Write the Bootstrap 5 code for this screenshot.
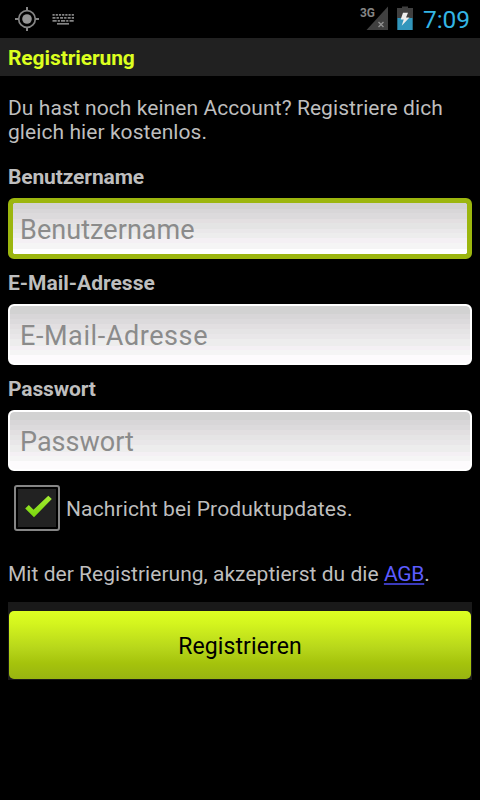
<!DOCTYPE html>
<html lang="de">
<head>
<meta charset="utf-8">
<meta name="viewport" content="width=device-width, initial-scale=1">
<title>Registrierung</title>
<link href="https://cdn.jsdelivr.net/npm/bootstrap@5.3.0/dist/css/bootstrap.min.css" rel="stylesheet">
<style>
body{background:#000;color:#bebebe;font:21px/24px Roboto,sans-serif;min-height:800px}
.status{height:38px;padding:0 9px 0 14px}
.clock{color:#33b5e5;font-size:24.5px;line-height:38px;padding-top:2px;margin-left:10px;letter-spacing:-.1px;width:48px;white-space:nowrap}
.titlebar{height:38px;background:#212121;color:#dcff1f;font-weight:700;line-height:38px;padding:1px 8px 0;letter-spacing:-.1px}
main{padding:20px 8px 0}
.intro{margin-bottom:21px;letter-spacing:.07px}
.form-label{font-weight:700;margin:0 0 9px;height:24px;letter-spacing:-.13px}
.form-label[for=mail]{letter-spacing:0}
.field{height:61px;margin-bottom:12px;border:2px solid #fff;border-radius:6px;font-size:27px;line-height:36px;padding:2px 10px 0;color:#8b8b8b;background:linear-gradient(#d2d2d2 0 8px,#d8d6d8 8px 13px,#dcdadc 13px 18px,#e2dfe1 18px 23px,#e5e4e5 23px 28px,#e9e7e9 28px 33px,#ededed 33px 40px,#f4f0f4 40px 44px,#f5f5f5 44px 49px,#fdfbfd 49px) padding-box,linear-gradient(#fff,#fff) border-box}
.field::placeholder{color:#8b8b8b;opacity:1}
#mail::placeholder{letter-spacing:.58px}
#user::placeholder{letter-spacing:.06px}
.field:focus{border:5px solid #9cb60e;padding:2px 7px 0;color:#8b8b8b;box-shadow:none;background:linear-gradient(#d2d2d2 0 6px,#d8d6d8 6px 10px,#dcdadc 10px 16px,#e3dfe1 16px 20px,#e4e4e4 20px 26px,#eae8ea 26px 30px,#ededed 30px 35px,#f4f0f4 35px 40px,#f5f5f5 40px 46px,#fff 46px) padding-box}
.checkbox{width:46px;height:46px;border:2px solid #858585;border-radius:3px;padding:2px;background:#000}
.checkbox svg{display:block;background:#222}
.check-row{padding-left:6px;gap:6px;margin:14px 0 31px}
.check-text{padding-top:2px;letter-spacing:.12px}
.terms{letter-spacing:.03px}
.terms a{color:#5c5cff;letter-spacing:-.2px;text-decoration:underline 2px #3a3aba;text-underline-offset:2px;text-decoration-skip-ink:none}
.action{background:#191919;padding:9px 1px 1px;margin-top:16px}
.submit{height:68px;border:0;border-radius:5px;font-size:23px;padding-top:11px;color:#000!important;letter-spacing:.1px;background:linear-gradient(#ddff22,#d4f51e 18%,#b7d61a 55%,#a5c30c 77%,#98b411)!important}
</style>
<script src="https://cdn.jsdelivr.net/npm/bootstrap@5.3.0/dist/js/bootstrap.bundle.min.js"></script>
</head>
<body>
<header>
<div class="status d-flex align-items-center">
<svg width="64" height="38" viewBox="14 0 64 38" fill="none">
<circle cx="27" cy="19" r="8.3" stroke="#858585" stroke-width="1.7"/>
<circle cx="27" cy="19" r="4.8" fill="#959595"/>
<path d="M27 7v4M27 27v4M15 19h4M35 19h4" stroke="#858585" stroke-width="2"/>
<g stroke="#858585" stroke-width="1.7"><path d="M52.5 14.8H74" stroke-dasharray="2.2 1"/><path d="M52.5 17.8H74" stroke-dasharray="3 1 2.4 1.2"/><path d="M52.5 20.8H74" stroke-dasharray="4.2 1 2.2 1.1"/><path d="M57 23.8h12"/></g>
</svg>
<svg class="ms-auto" width="54" height="38" viewBox="359 0 54 38">
<path d="M388 6.5V30H366.500z" fill="#404040"/>
<text x="360" y="17" font-family="Roboto,sans-serif" font-size="13" font-weight="700" fill="#858585" stroke="#000" stroke-width="2" paint-order="stroke" textLength="15" lengthAdjust="spacingAndGlyphs">3G</text>
<path d="M378.500 22l5 5m0-5l-5 5" stroke="#909090" stroke-width="1.400"/>
<path d="M397 8h5V6.500h6V8h5v10h-16z" fill="#404040"/><path d="M397.300 18H412.700V30H397.300z" fill="#3296bc"/>
<path d="M403 12.800h5l-2 4.700h3.500l-7.800 8.200 2-6.200h-3z" fill="#eee"/>
</svg>
<span class="clock">7:09</span>
</div>
<div class="titlebar"><span>Registrierung</span></div>
</header>
<main>
<p class="intro">Du hast noch keinen Account? Registriere dich<br>gleich hier kostenlos.</p>
<form>
<label class="form-label d-block" for="user">Benutzername</label>
<input class="form-control field" id="user" placeholder="Benutzername" autofocus>
<label class="form-label d-block" for="mail">E-Mail-Adresse</label>
<input class="form-control field" id="mail" placeholder="E-Mail-Adresse">
<label class="form-label d-block" for="pass">Passwort</label>
<input class="form-control field" id="pass" placeholder="Passwort">
<div class="check-row d-flex align-items-center">
<span class="checkbox" role="checkbox" aria-checked="true" aria-label="Nachricht bei Produktupdates"><svg width="38" height="38" viewBox="18 489 38 38"><defs><linearGradient id="g" x2="0" y2="1"><stop stop-color="#a5ed32"/><stop offset="1" stop-color="#79d60d"/></linearGradient></defs><path d="M25.200 508.500l3.600-3.500 4.700 4.700L48.300 495.700l3.500 3.400L34 517.200z" fill="url(#g)"/></svg></span>
<span class="check-text">Nachricht bei Produktupdates.</span>
</div>
<p class="terms mb-0"><span>Mit der Registrierung, akzeptierst du die </span><a href="#">AGB</a>.</p>
<div class="action"><button type="button" class="btn submit w-100">Registrieren</button></div>
</form>
</main>
<script>document.getElementById('user').focus();</script>
</body>
</html>
